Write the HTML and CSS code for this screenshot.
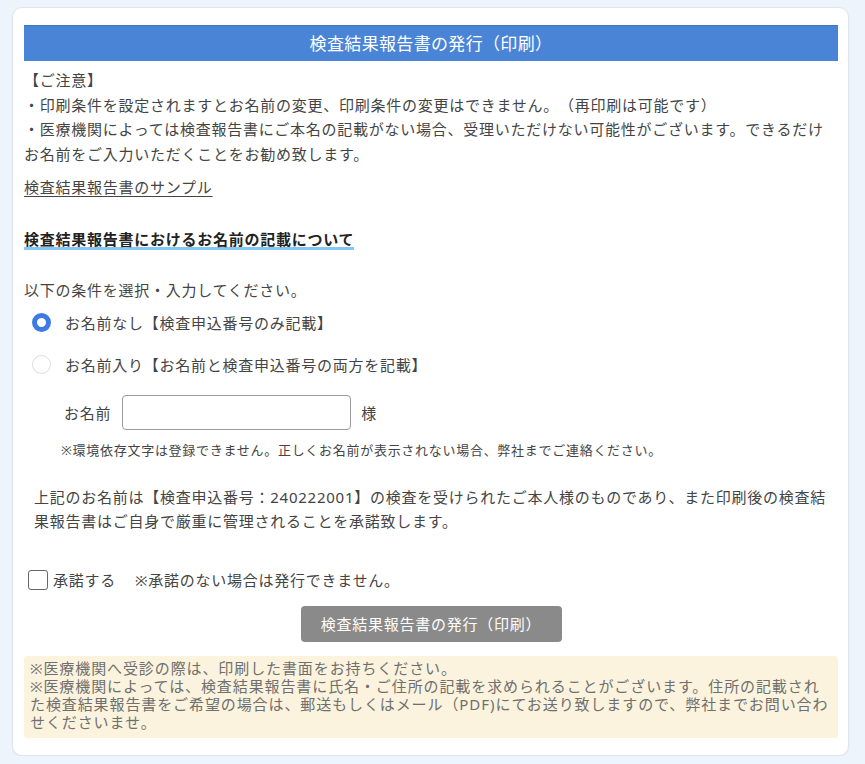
FILE: index.html
```html
<!DOCTYPE html>
<html lang="ja">
<head>
<meta charset="utf-8">
<title>検査結果報告書の発行（印刷）</title>
<link rel="stylesheet" href="styles.css">
</head>
<body>
<div class="card">
  <h1 class="title">検査結果報告書の発行（印刷）</h1>
  <div class="caution">
    <p>【ご注意】</p>
    <p>・印刷条件を設定されますとお名前の変更、印刷条件の変更はできません。（再印刷は可能です）</p>
    <p>・医療機関によっては検査報告書にご本名の記載がない場合、受理いただけない可能性がございます。できるだけお名前をご入力いただくことをお勧め致します。</p>
  </div>
  <p class="sample"><a href="#" class="link">検査結果報告書のサンプル</a></p>
  <div class="heading-wrap"><h2 class="heading">検査結果報告書におけるお名前の記載について</h2></div>
  <p class="lead">以下の条件を選択・入力してください。</p>
  <label class="radio-row radio-first"><span class="radio checked"></span><span>お名前なし【検査申込番号のみ記載】</span></label>
  <label class="radio-row radio-second"><span class="radio"></span><span>お名前入り【お名前と検査申込番号の両方を記載】</span></label>
  <div class="name-row">
    <span class="name-label">お名前</span>
    <span class="name-input"></span>
    <span class="name-suffix">様</span>
  </div>
  <p class="env-note">※環境依存文字は登録できません。正しくお名前が表示されない場合、弊社までご連絡ください。</p>
  <p class="consent-text">上記のお名前は【検査申込番号：240222001】の検査を受けられたご本人様のものであり、また印刷後の検査結果報告書はご自身で厳重に管理されることを承諾致します。</p>
  <label class="check-row"><span class="checkbox"></span><span class="check-label">承諾する</span><span>※承諾のない場合は発行できません。</span></label>
  <div class="btn-wrap"><span class="btn">検査結果報告書の発行（印刷）</span></div>
  <div class="notice">
    <p>※医療機関へ受診の際は、印刷した書面をお持ちください。</p>
    <p>※医療機関によっては、検査結果報告書に氏名・ご住所の記載を求められることがございます。住所の記載された検査結果報告書をご希望の場合は、郵送もしくはメール（PDF)にてお送り致しますので、弊社までお問い合わせくださいませ。</p>
  </div>
</div>
</body>
</html>
```

FILE: styles.css
```css
* { box-sizing: border-box; }
html, body { margin: 0; padding: 0; }
body {
  background: #edf4fb;
  font-family: "Noto Sans", "Noto Sans CJK JP", sans-serif;
  color: #444;
  font-size: 15px;
  letter-spacing: 0.05em;
  text-spacing-trim: space-all;
}
p { margin: 0; }
.card {
  width: 837px;
  margin: 7px 0 0 12px;
  background: #fff;
  border: 1px solid #dde6ee;
  border-radius: 10px;
  padding: 17px 10px 17px 11px;
  box-shadow: 0 1px 2px rgba(0,0,0,0.05);
}
.title {
  margin: 0;
  height: 36px;
  line-height: 36px;
  background: #4a84d6;
  border-top: 1px solid #3f74c4;
  color: #fff;
  text-align: center;
  font-size: 17px;
  font-weight: normal;
  letter-spacing: 0.02em;
}
.caution {
  margin-top: 7px;
  line-height: 24.5px;
}
.sample {
  margin-top: 9px;
  line-height: 24.5px;
}
.link {
  color: #444;
  text-decoration: underline;
  text-underline-offset: 3px;
}
.heading-wrap { margin-top: 31px; line-height: 16px; }
.heading {
  display: inline-block;
  margin: 0;
  font-size: 15px;
  font-weight: bold;
  color: #222;
  line-height: 16px;
  border-bottom: 3px solid #84c8f2;
}
.lead { margin-top: 28px; line-height: 24px; }
.radio-row {
  display: flex;
  align-items: center;
  gap: 14px;
  height: 24px;
  padding-left: 8px;
  line-height: 24px;
}
.radio-first { margin-top: 9px; }
.radio-second { margin-top: 18px; }
.radio {
  width: 19px;
  height: 19px;
  border-radius: 50%;
  border: 1px solid #dcdcdc;
  background: #fff;
  flex: none;
}
.radio.checked {
  border: 5px solid #3c7ae6;
}
.name-row {
  display: flex;
  align-items: center;
  margin-top: 18px;
  padding-left: 40px;
  height: 35px;
}
.name-label { margin-right: 11px; }
.name-input {
  width: 229px;
  height: 35px;
  border: 1px solid #9a9a9a;
  border-radius: 4px;
  margin-right: 10px;
}
.env-note {
  margin-top: 11px;
  padding-left: 37px;
  font-size: 13px;
  line-height: 18px;
  letter-spacing: 0.055em;
}
.consent-text {
  margin-top: 26px;
  padding-left: 10px;
  line-height: 24px;
}
.check-row {
  display: flex;
  align-items: center;
  margin-top: 35px;
  padding-left: 4px;
  height: 24px;
}
.checkbox {
  width: 20px;
  height: 20px;
  border: 1px solid #666;
  border-radius: 3px;
  margin-right: 5px;
  flex: none;
}
.check-label { margin-right: 19px; }
.btn-wrap {
  display: flex;
  justify-content: center;
  margin-top: 14px;
}
.btn {
  width: 261px;
  height: 36px;
  line-height: 36px;
  text-align: center;
  background: #8a8a8a;
  color: #fff;
  border-radius: 4px;
  font-size: 15px;
}
.notice {
  margin-top: 14px;
  background: #fbf3dd;
  border-radius: 3px;
  padding: 3px 6px 7px;
  color: #6f6f6f;
  line-height: 18px;
  letter-spacing: 0.06em;
}
```
